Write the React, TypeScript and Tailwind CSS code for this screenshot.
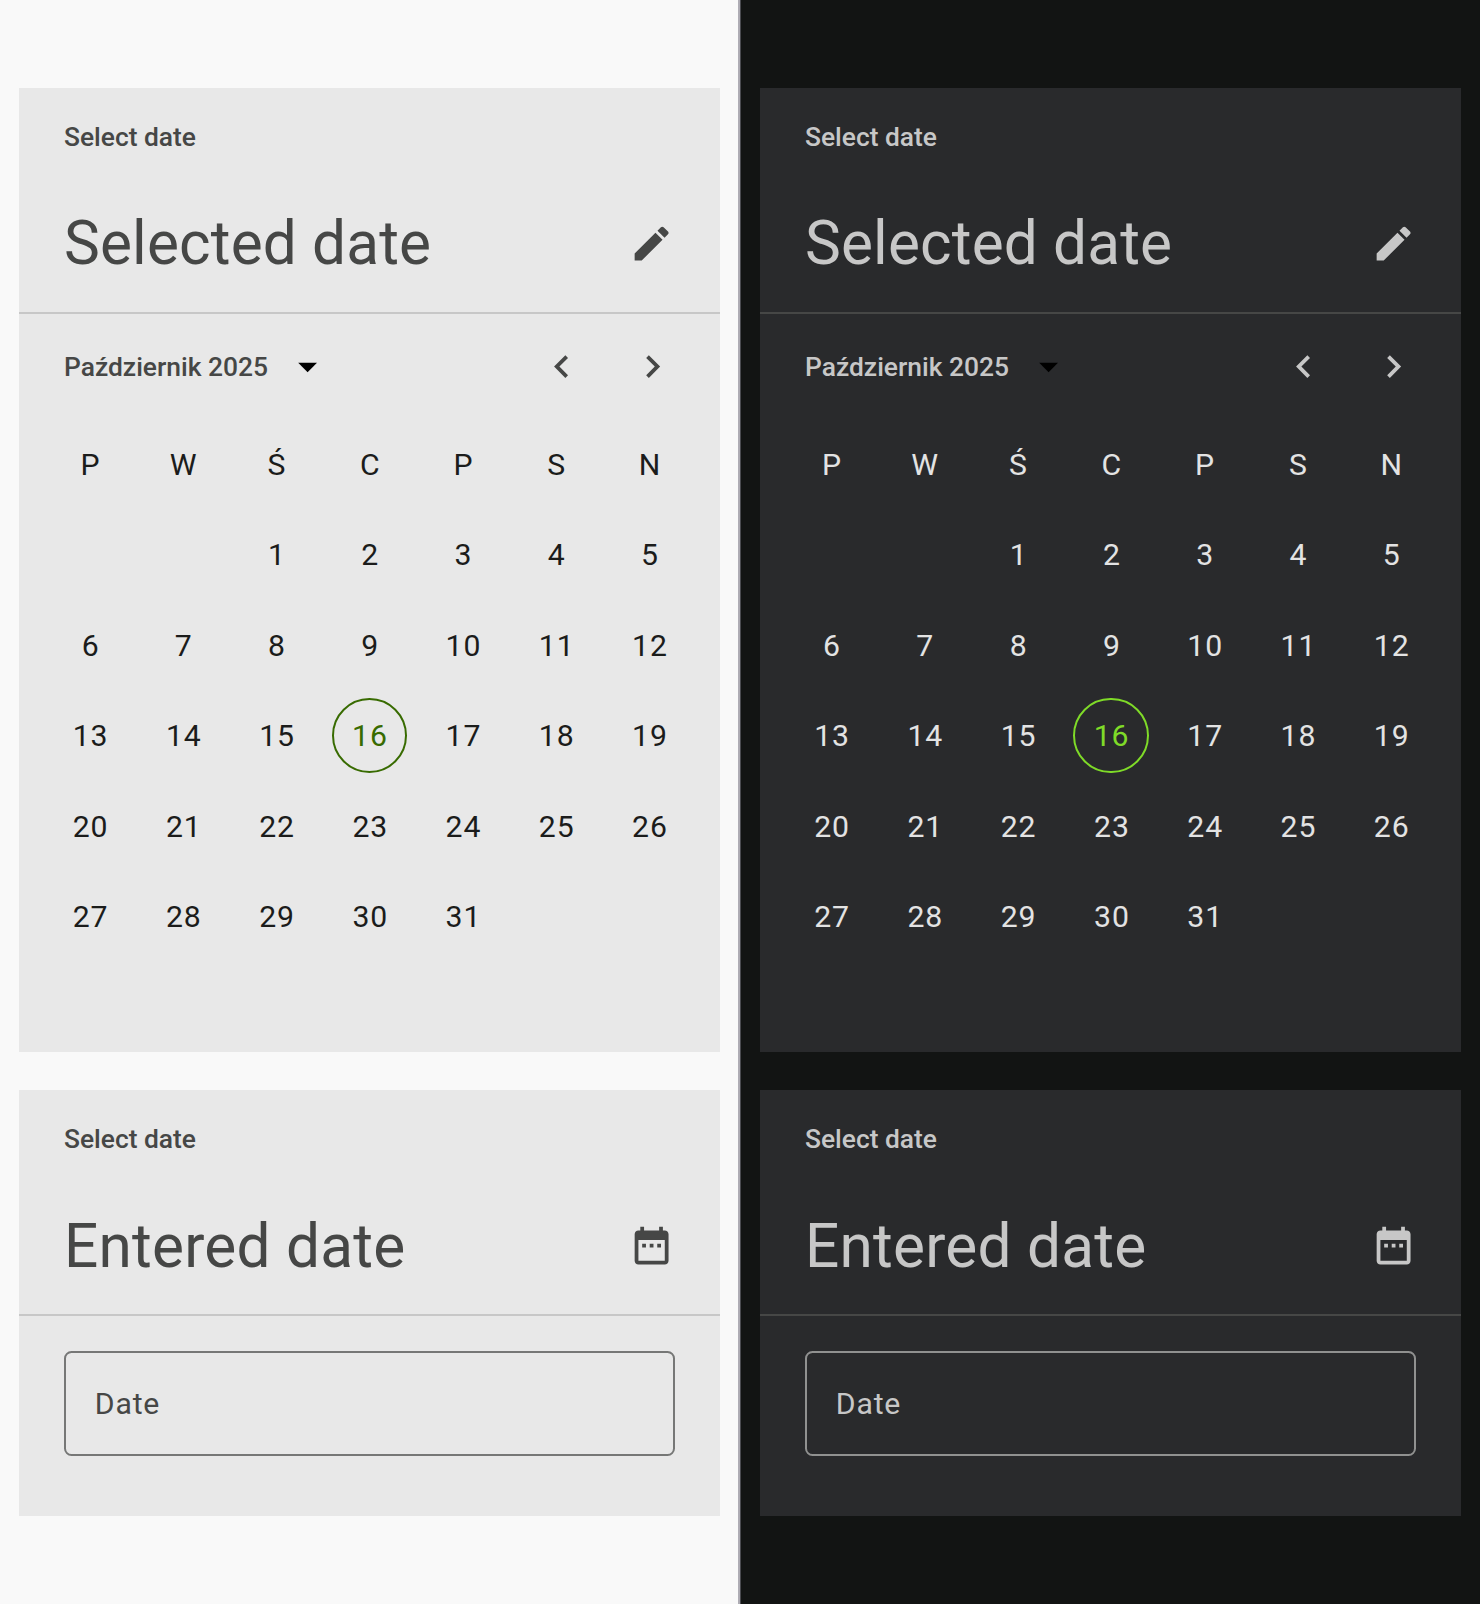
import React from "react";

type Theme = {
  page: string;
  card: string;
  muted: string;
  day: string;
  divider: string;
  today: string;
  field: string;
  grid: string;
};

const light: Theme = {
  page: "bg-[#f9f9f9] w-[738px] pl-[19px]",
  card: "bg-[#e8e8e8] w-[700.6px]",
  muted: "text-[#464746]",
  day: "text-[#1b1c1b]",
  divider: "border-[#c7c7c7]",
  today: "text-[#386b01] border-[#386b01]",
  field: "border-[#767776]",
  grid: "ml-[24.2px] mr-[23.8px]",
};

const dark: Theme = {
  page: "bg-[#121413] w-[739px] pl-[19px]",
  card: "bg-[#292a2c] w-[701px]",
  muted: "text-[#c7c7c7]",
  day: "text-[#e3e3e3]",
  divider: "border-[#464746]",
  today: "text-[#7fdb28] border-[#7fdb28]",
  field: "border-[#909190]",
  grid: "ml-[24.6px] mr-[23.4px]",
};

const weekdays = ["P", "W", "Ś", "C", "P", "S", "N"];
const days = [null, null, ...Array.from({ length: 31 }, (_, i) => i + 1)];

function Icon({ d }: { d: string }) {
  return (
    <svg viewBox="0 0 24 24" className="block size-[45.2px] shrink-0" fill="currentColor">
      <path d={d} />
    </svg>
  );
}

const EDIT =
  "M3 17.25V21h3.75L17.81 9.94l-3.75-3.75L3 17.25zM20.71 7.04c.39-.39.39-1.02 0-1.41l-2.34-2.34c-.39-.39-1.02-.39-1.41 0l-1.83 1.83 3.75 3.75 1.83-1.83z";
const CALENDAR =
  "M9 11H7v2h2v-2zm4 0h-2v2h2v-2zm4 0h-2v2h2v-2zm2-7h-1V2h-2v2H8V2H6v2H5c-1.11 0-1.99.9-1.99 2L3 20c0 1.1.89 2 2 2h14c1.1 0 2-.9 2-2V6c0-1.1-.9-2-2-2zm0 16H5V9h14v11z";
const LEFT = "M15.41 7.41L14 6l-6 6 6 6 1.41-1.41L10.83 12z";
const RIGHT = "M10 6L8.59 7.41 13.17 12l-4.58 4.59L10 18l6-6z";
const DROP = "M7 10l5 5 5-5z";

function Header({
  t,
  title,
  icon,
  titleClass,
}: {
  t: Theme;
  title: string;
  icon: string;
  titleClass: string;
}) {
  return (
    <header className={`h-[226px] border-b-2 pl-[45px] pr-[45.3px] pt-[30px] ${t.divider} ${t.muted}`}>
      <div className="h-[38px] text-[26.4px] font-medium leading-[38px] tracking-[-0.02px]">Select date</div>
      <div className="mt-[50px] flex h-[76px] items-center justify-between">
        <h1 className={`text-[60.3px] leading-[76px] ${titleClass}`}>{title}</h1>
        <Icon d={icon} />
      </div>
    </header>
  );
}

function Picker({ t }: { t: Theme }) {
  return (
    <section className={`h-[964px] ${t.card}`}>
      <Header t={t} title="Selected date" icon={EDIT} titleClass="tracking-[0.16px]" />
      <div className={`flex h-[105px] items-center pl-[45px] pr-[44.8px] ${t.muted}`}>
        <span className="w-[220.7px] whitespace-nowrap pt-[2px] text-[26.4px] font-medium tracking-[0px]">
          Październik 2025
        </span>
        <span className="text-black">
          <Icon d={DROP} />
        </span>
        <div className="ml-auto flex gap-[45.3px]">
          <Icon d={LEFT} />
          <Icon d={RIGHT} />
        </div>
      </div>
      <div className={`grid auto-rows-[90.5px] grid-cols-7 text-[30.2px] tracking-[0.94px] ${t.grid} ${t.day}`}>
        {weekdays.map((w, i) => (
          <div key={`w${i}`} className="flex items-center justify-center pl-[1.4px]">
            {w}
          </div>
        ))}
        {days.map((d, i) =>
          d === 16 ? (
            <div key={i} className="flex items-center justify-center">
              <span
                className={`flex size-[75.4px] items-center justify-center rounded-full border-2 pl-[1px] ${t.today}`}
              >
                {d}
              </span>
            </div>
          ) : (
            <div key={i} className="flex items-center justify-center pl-[1.6px]">
              {d}
            </div>
          ),
        )}
      </div>
    </section>
  );
}

function Entry({ t }: { t: Theme }) {
  return (
    <section className={`mt-[38px] h-[426px] ${t.card}`}>
      <Header t={t} title="Entered date" icon={CALENDAR} titleClass="pt-[2px] tracking-[0.24px]" />
      <div
        className={`mx-[45px] mt-[34.5px] flex h-[105.5px] items-center rounded-[7.5px] border-2 pl-[28.8px] ${t.field}`}
      >
        <span className={`text-[30.2px] tracking-[0.8px] ${t.muted}`}>Date</span>
      </div>
    </section>
  );
}

function Pane({ t }: { t: Theme }) {
  return (
    <div className={`h-[1604px] shrink-0 pt-[88px] ${t.page}`}>
      <Picker t={t} />
      <Entry t={t} />
    </div>
  );
}

export default function App() {
  return (
    <main className="flex h-[1604px] w-[1480px] overflow-hidden font-[Roboto,sans-serif]">
      <Pane t={light} />
      <div className="w-[2px] shrink-0 bg-[#aeacb4]" />
      <div className="w-px shrink-0 bg-[#4a4b50]" />
      <Pane t={dark} />
    </main>
  );
}
